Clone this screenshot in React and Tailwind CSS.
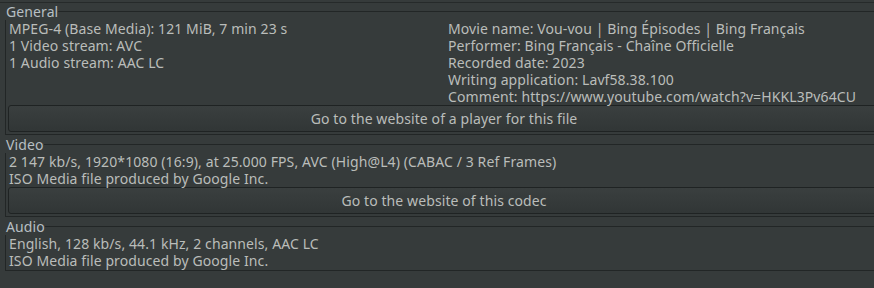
import React from "react";

const general = {
  left: [
    "MPEG-4 (Base Media): 121 MiB, 7 min 23 s",
    "1 Video stream: AVC",
    "1 Audio stream: AAC LC",
  ],
  right: [
    "Movie name: Vou-vou | Bing Épisodes | Bing Français",
    "Performer: Bing Français - Chaîne Officielle",
    "Recorded date: 2023",
    "Writing application: Lavf58.38.100",
    "Comment: https://www.youtube.com/watch?v=HKKL3Pv64CU",
  ],
};

const Group = ({ title, children, className = "" }) => (
  <div className={`w-[878px] ${className}`}>
    <div className="flex items-center h-[17px]">
      <span className="pl-[1px] text-[#b7bfc3]">{title}</span>
      <div className="flex-1 border-t border-[#222626]" />
    </div>
    <div className="border-l border-r border-b border-[#222626] px-[2px]">{children}</div>
  </div>
);

const Button = ({ children }) => (
  <div className="h-[27px] flex items-center justify-center rounded-[3px] border border-[#1f2323] bg-gradient-to-b from-[#3a3f3f] to-[#313636]">
    {children}
  </div>
);

const Lines = ({ items }) => (
  <div className="flex flex-col">
    {items.map((t) => (
      <div key={t} className="h-[17px] whitespace-nowrap">
        {t}
      </div>
    ))}
  </div>
);

export default function App() {
  return (
    <div
      className="w-[874px] h-[288px] overflow-hidden bg-[#363b3b] text-[#babdba] text-[14px] leading-[17px] tracking-[0.1px]"
      style={{ fontFamily: '"Noto Sans", sans-serif' }}
    >
      <div className="w-[890px] pl-[5px]">
        <div className="h-[2px]" />
        <div className="-ml-[5px] border-t border-[#262a2a]" />

        <Group title="General">
          <div className="flex px-[1px]">
            <div className="w-[439px]">
              <Lines items={general.left} />
            </div>
            <Lines items={general.right} />
          </div>
          <div className="pb-[2px]">
            <Button>Go to the website of a player for this file</Button>
          </div>
        </Group>

        <Group title="Video" className="mt-[1px]">
          <div className="px-[1px]">
            <Lines
              items={[
                "2 147 kb/s, 1920*1080 (16:9), at 25.000 FPS, AVC (High@L4) (CABAC / 3 Ref Frames)",
                "ISO Media file produced by Google Inc.",
              ]}
            />
          </div>
          <div className="pb-[2px]">
            <Button>Go to the website of this codec</Button>
          </div>
        </Group>

        <Group title="Audio" className="mt-[1px]">
          <div className="px-[1px] pb-[1px]">
            <Lines
              items={[
                "English, 128 kb/s, 44.1 kHz, 2 channels, AAC LC",
                "ISO Media file produced by Google Inc.",
              ]}
            />
          </div>
        </Group>
      </div>
    </div>
  );
}
